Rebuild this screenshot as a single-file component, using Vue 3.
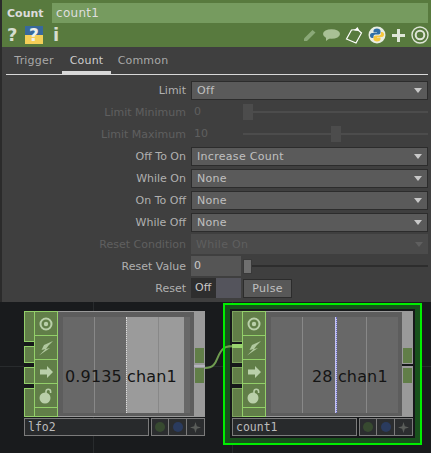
<template>
  <div class="app">
    <div class="panel">
      <div class="head">
        <div class="head-top">
          <span class="op-type">Count</span>
          <div class="op-name">count1</div>
        </div>
        <div class="head-tools">
          <span class="glyph">?</span>
          <span class="py-help"><span>?</span></span>
          <span class="glyph info">i</span>
          <div class="spacer"></div>
          <svg class="tool" width="16" height="16" viewBox="0 0 16 16">
            <path d="M2 11.500 10.500 3l3 2.500L5 14H2z" fill="#8aa877" />
          </svg>
          <svg class="tool" width="19" height="16" viewBox="0 0 19 16">
            <ellipse cx="9.500" cy="7" rx="8.500" ry="4.800" fill="#a8c095" />
            <path d="M4 10v4l4-3z" fill="#a8c095" />
          </svg>
          <svg class="tool" width="19" height="18" viewBox="0 0 19 18">
            <path d="M6.500 4 1.500 13 11 17l5.500-10-4-3.500z" fill="#587a3e" stroke="#fff" stroke-width="1.200" />
            <path d="M9 4.500 12.500 1l2 4z" fill="#fff" />
          </svg>
          <svg class="tool" width="18" height="18" viewBox="0 0 18 18">
            <circle cx="9" cy="9" r="8.500" fill="#e8ede3" />
            <path d="M9 2.500c-2.500 0-3.500 1-3.500 2.500v1.500H9V7H4C2.800 7 2 8 2 9.500S2.800 12 4 12h1.500v-1.500C5.500 9 6.500 8.500 8 8.500h2.500c1 0 2-.8 2-2V5c0-1.500-1.500-2.500-3.500-2.500z" fill="#2f6ea5" />
            <path d="M9 15.500c2.500 0 3.500-1 3.500-2.500v-1.500H9V11h5c1.200 0 2-1 2-2.500S15.200 6 14 6h-1v1.500C13 9 12 9.500 10.500 9.500H8c-1 0-2.500.8-2.500 2V13c0 1.500 1.500 2.500 3.500 2.500z" fill="#f5c73d" />
          </svg>
          <svg class="tool wide-gap" width="15" height="15" viewBox="0 0 15 15">
            <path d="M6 1h3v5h5v3H9v5H6V9H1V6h5z" fill="#dfe6d8" />
          </svg>
          <svg class="tool wide-gap last" width="18" height="18" viewBox="0 0 18 18">
            <circle cx="9" cy="9" r="8" fill="none" stroke="#dfe6d8" stroke-width="1.400" />
            <circle cx="9" cy="9" r="4.300" fill="none" stroke="#dfe6d8" stroke-width="2" />
          </svg>
        </div>
      </div>

      <div class="tabs">
        <span v-for="t in tabs" :key="t" class="tab" :class="{ active: t === 'Count' }">{{ t }}</span>
      </div>

      <div class="params">
        <div v-for="p in params" :key="p.label" class="row" :class="{ off: p.off }">
          <label>{{ p.label }}</label>

          <div v-if="p.type === 'menu'" class="menu">
            <span>{{ p.value }}</span>
            <i class="arrow"></i>
          </div>

          <template v-else-if="p.type === 'slider'">
            <div class="num">{{ p.value }}</div>
            <div class="slider">
              <div class="knob" :style="{ marginLeft: p.pos + 'px' }"></div>
            </div>
          </template>

          <template v-else>
            <div class="toggle">
              <span class="toggle-off">Off</span>
              <span class="toggle-swatch"></span>
            </div>
            <button class="pulse">Pulse</button>
          </template>
        </div>
      </div>
    </div>

    <div class="network">
      <svg class="wire" width="40" height="40" viewBox="0 0 40 40">
        <path d="M0 33c14 0 10-13 19-20 3-2 6-2 14-2" fill="none" stroke="#6f9c50" stroke-width="2" />
        <path d="M27 11h10" stroke="#9ad36f" stroke-width="4" />
      </svg>
      <div v-for="n in nodes" :key="n.name" :class="n.selected ? 'frame' : 'plain'">
        <div :class="{ 'frame-inner': n.selected }">
          <div class="node" :class="{ picked: n.selected }">
            <div class="node-body">
              <div class="inputs">
                <span class="in in1"></span>
                <span class="in in2"></span>
                <span class="in in2"></span>
                <span class="in in3"></span>
              </div>
              <div class="flags">
                <div class="flag">
                  <svg width="14" height="14" viewBox="0 0 14 14">
                    <circle cx="7" cy="7" r="5.500" fill="none" stroke="#b9cfa9" stroke-width="2" />
                    <circle cx="7" cy="7" r="2.200" fill="#b9cfa9" />
                  </svg>
                </div>
                <div class="flag">
                  <svg width="16" height="16" viewBox="0 0 16 16">
                    <path d="M15 1 6 5 3.500 10l4-1L1 15.500 12 8l-4 1 2.500-3.500z" fill="#b0c89e" />
                  </svg>
                </div>
                <div class="flag">
                  <svg width="15" height="14" viewBox="0 0 15 14">
                    <path d="M8 1l6 6-6 6v-3.500H1v-5h7z" fill="#b9cfa9" />
                  </svg>
                </div>
                <div class="flag">
                  <svg width="15" height="16" viewBox="0 0 15 16">
                    <circle cx="6" cy="10" r="5.500" fill="#b9cfa9" />
                    <path d="M7 5V3.500a2.300 2.300 0 0 1 4.600 0V5" fill="none" stroke="#b9cfa9" stroke-width="1.600" />
                  </svg>
                </div>
                <div class="flag flag-end"></div>
              </div>
              <div class="viewer">
                <div class="chart">
                  <div v-if="n.lit" class="lit" :style="{ left: n.lit + 'px' }"></div>
                  <i v-for="x in n.lines" :key="x" class="grid" :style="{ left: x + 'px' }"></i>
                  <i v-if="n.cursor" class="cursor" :style="{ left: n.cursor + 'px' }"></i>
                  <div class="readout" :style="{ paddingLeft: n.textAt + 'px' }">{{ n.readout }}</div>
                </div>
              </div>
              <div class="outputs">
                <span class="out"></span>
                <span class="out second"></span>
              </div>
            </div>
            <div class="node-foot">
              <div class="node-name">{{ n.name }}</div>
              <div class="foot-btn"><b class="dot green"></b></div>
              <div class="foot-btn"><b class="dot blue"></b></div>
              <div class="foot-btn">
                <svg width="11" height="11" viewBox="0 0 11 11">
                  <path d="M5.500 0 6.800 4.200 11 5.500 6.800 6.800 5.500 11 4.200 6.800 0 5.500 4.200 4.200z" fill="#5a5d5a" />
                </svg>
              </div>
            </div>
          </div>
        </div>
      </div>
    </div>
  </div>
</template>

<script setup>
const tabs = ['Trigger', 'Count', 'Common']

const params = [
  { label: 'Limit', type: 'menu', value: 'Off' },
  { label: 'Limit Minimum', type: 'slider', value: '0', pos: 0, off: true },
  { label: 'Limit Maximum', type: 'slider', value: '10', pos: 88, off: true },
  { label: 'Off To On', type: 'menu', value: 'Increase Count' },
  { label: 'While On', type: 'menu', value: 'None' },
  { label: 'On To Off', type: 'menu', value: 'None' },
  { label: 'While Off', type: 'menu', value: 'None' },
  { label: 'Reset Condition', type: 'menu', value: 'While On', off: true },
  { label: 'Reset Value', type: 'slider', value: '0', pos: 0 },
  { label: 'Reset', type: 'pulse' },
]

const nodes = [
  { name: 'lfo2', readout: '0.9135 chan1', textAt: 2, lit: 63, lines: [31, 95] },
  { name: 'count1', readout: '28 chan1', textAt: 41, cursor: 64, lines: [31, 95], selected: true },
]
</script>

<style scoped>
.app {
  width: 431px;
  height: 453px;
  overflow: hidden;
  background: #2b2b2b;
  font-family: "DejaVu Sans", sans-serif;
  font-size: 11px;
}

.panel {
  margin-left: 2px;
  height: 302px;
  background: #3f3f3f;
}

.head {
  height: 47px;
  padding-top: 3px;
  box-sizing: border-box;
  background: #587a3e;
}

.head-top {
  display: flex;
  align-items: center;
  height: 20px;
}

.op-type {
  width: 50px;
  padding-left: 5px;
  box-sizing: border-box;
  color: #dcdcdc;
  font-weight: 700;
  font-size: 11px;
}

.op-name {
  flex: 1;
  margin-right: 3px;
  padding-left: 4px;
  height: 20px;
  line-height: 20px;
  background: #769b5f;
  color: #dedede;
  font-size: 12px;
  letter-spacing: 0.3px;
}

.head-tools {
  display: flex;
  align-items: center;
  height: 24px;
  padding-left: 5px;
}

.glyph {
  width: 14px;
  color: #d6ddcf;
  font-weight: 700;
  font-size: 18px;
  line-height: 20px;
}

.py-help {
  width: 18px;
  height: 18px;
  margin-left: 4px;
  background: linear-gradient(#38699c 50%, #f4cf58 50%);
  text-align: center;
  color: #eef0ea;
  font-weight: 700;
  font-size: 17px;
  line-height: 18px;
}

.info {
  margin-left: 10px;
}

.spacer {
  flex: 1;
}

.tool {
  margin-left: 4px;
  flex: none;
}

.tool.wide-gap {
  margin-left: 5px;
}

.tool.last {
  margin-right: 2px;
}

.tabs {
  display: flex;
  height: 28px;
  margin: 0 3px 0 4px;
  border-bottom: 1px solid #d8d8d8;
  box-sizing: border-box;
}

.tab {
  width: 49px;
  text-align: center;
  line-height: 28px;
  color: #a8a8a8;
  letter-spacing: 0.2px;
}

.tab:nth-child(3) {
  width: 58px;
  margin-left: 3px;
}

.tab:first-child {
  width: 56px;
}

.tab.active {
  color: #cdcdcd;
  box-shadow: inset 0 -3px 0 #d8d8d8;
}

.params {
  padding-top: 4px;
}

.row {
  display: flex;
  align-items: center;
  height: 22px;
  color: #b0b0b0;
}

.row label {
  width: 184px;
  text-align: right;
  margin-right: 5px;
  white-space: nowrap;
}

.row.off {
  color: #5f5f5f;
}

.menu {
  width: 237px;
  height: 19px;
  display: flex;
  align-items: center;
  justify-content: space-between;
  box-sizing: border-box;
  padding: 0 5px;
  border: 1px solid #2c2c2c;
  background: #5a5a5a;
  color: #c0c0c0;
  letter-spacing: 0.3px;
}

.arrow {
  border-left: 4px solid transparent;
  border-right: 4px solid transparent;
  border-top: 5px solid #c8c8c8;
}

.off .menu {
  height: 20px;
  border: none;
  background: #4b4b4b;
  color: #5f5f5f;
}

.off .arrow {
  border-top-color: #5f5f5f;
}

.num {
  width: 50px;
  height: 20px;
  line-height: 20px;
  padding-left: 3px;
  box-sizing: border-box;
  background: #555;
  color: #c8c8c8;
}

.off .num {
  background: none;
  color: #5f5f5f;
}

.slider {
  width: 185px;
  height: 16px;
  margin-left: 2px;
  display: flex;
  align-items: center;
  background: linear-gradient(#2d2d2d, #2d2d2d) center / 100% 2px no-repeat;
}

.off .slider {
  background-image: linear-gradient(#4c4c4c, #4c4c4c);
}

.knob {
  width: 9px;
  height: 15px;
  border: 1px solid #393939;
  box-sizing: border-box;
  background: #6f6f6f;
}

.off .knob {
  width: 10px;
  height: 16px;
  border: none;
  background: #4c4c4c;
}

.toggle {
  display: flex;
  width: 50px;
  height: 20px;
}

.toggle-off {
  width: 25px;
  line-height: 20px;
  padding-left: 4px;
  box-sizing: border-box;
  background: #2e2e2e;
  color: #c8c8c8;
}

.toggle-swatch {
  flex: 1;
  background: #54545c;
}

.pulse {
  width: 49px;
  height: 19px;
  margin-left: 2px;
  padding: 0;
  border: 1px solid #2c2c2c;
  background: #585858;
  color: #c0c0c0;
  font: inherit;
  letter-spacing: 0.3px;
}

.network {
  position: relative;
  display: flex;
  align-items: flex-start;
  gap: 18px;
  height: 151px;
  padding: 1px 0 0 24px;
  box-sizing: border-box;
  background:
    linear-gradient(#282b2d, #282b2d) 0 64px / 100% 1px no-repeat,
    linear-gradient(#282b2d, #282b2d) 93px 0 / 1px 100% no-repeat,
    linear-gradient(#282b2d, #282b2d) 232px 0 / 1px 100% no-repeat,
    #191b1d;
}

.wire {
  position: absolute;
  left: 205px;
  top: 33px;
  z-index: 2;
}

.plain {
  padding-top: 8px;
}

.frame {
  position: relative;
  padding: 6px 7px 7px;
  background: #18511c;
}

/* sits above the wire, which passes under the selection outline */
.frame::after {
  content: "";
  position: absolute;
  inset: 0;
  z-index: 3;
  border: 2px solid #00ee00;
  pointer-events: none;
}

.frame-inner {
  padding: 2px;
  background: #16181a;
}

.node {
  width: 181px;
}

.node-body {
  display: flex;
  height: 106px;
  background: #9a9a9a;
}

.inputs {
  width: 10px;
  background: #16181a;
}

.in {
  display: block;
  box-sizing: border-box;
  background: #617e48;
  border: 1px solid #93cf6a;
  border-right: none;
}

.picked .in {
  border-color: #7da35e;
}

.in1 {
  height: 31px;
  margin-bottom: 4px;
}

.in2 {
  height: 17px;
  margin-bottom: 4px;
}

.in3 {
  height: 29px;
}

.flags {
  width: 24px;
  display: flex;
  flex-direction: column;
  box-sizing: border-box;
  border: 1px solid #93cf6a;
  border-bottom: none;
  background: #617e48;
}

.flag {
  flex: 0 0 24px;
  display: flex;
  align-items: center;
  justify-content: center;
  box-sizing: border-box;
  border-bottom: 1px solid #93cf6a;
}

.flag-end {
  flex: 1;
}

.viewer {
  flex: 1;
  margin: 1px 0;
  padding: 5px 4px 4px 5px;
  background: #5d5d5d;
}

.chart {
  position: relative;
  height: 96px;
  background: #686868;
  overflow: hidden;
}

.lit {
  position: absolute;
  top: 0;
  bottom: 0;
  right: 6px;
  background: #9b9b9b;
  border-left: 1px dotted #ddd;
}

.grid {
  position: absolute;
  top: 0;
  bottom: 0;
  width: 1px;
  background: #888;
}

.cursor {
  position: absolute;
  top: 0;
  bottom: 0;
  width: 1px;
  background: #c4c4f2;
  border-right: 1px dotted #6a6ac0;
}

.readout {
  position: relative;
  padding-top: 50px;
  color: #151515;
  font-size: 16px;
  letter-spacing: 0.15px;
  line-height: 20px;
  white-space: nowrap;
}

.outputs {
  width: 11px;
  background: linear-gradient(#b4b4bc, #b4b4bc) 0 54px / 100% 2px no-repeat;
}

.picked .outputs {
  background: linear-gradient(#16181a, #16181a) 0 53px / 100% 2px no-repeat;
}

.out {
  display: block;
  width: 9px;
  height: 15px;
  margin: 37px 0 5px 1px;
  background: #617e48;
}

.out.second {
  margin-top: 0;
}

.node-foot {
  display: flex;
  height: 18px;
  margin-top: 1px;
}

.node-name {
  flex: 1;
  box-sizing: border-box;
  border: 1px solid #7b7b7b;
  background: #282a2c;
  padding-left: 3px;
  line-height: 16px;
  color: #bcbcbc;
  font-family: "DejaVu Sans Mono", monospace;
  font-size: 11.500px;
}

.foot-btn {
  width: 18px;
  box-sizing: border-box;
  display: flex;
  align-items: center;
  justify-content: center;
  border: 1px solid #7b7b7b;
  border-left-width: 0;
  background: #2b2d2f;
}

.node-name + .foot-btn {
  margin-left: 2px;
  border-left-width: 1px;
}

.dot {
  width: 10px;
  height: 10px;
  border-radius: 50%;
}

.dot.green {
  background: #374a30;
}

.dot.blue {
  background: #2a3b5e;
}
</style>
